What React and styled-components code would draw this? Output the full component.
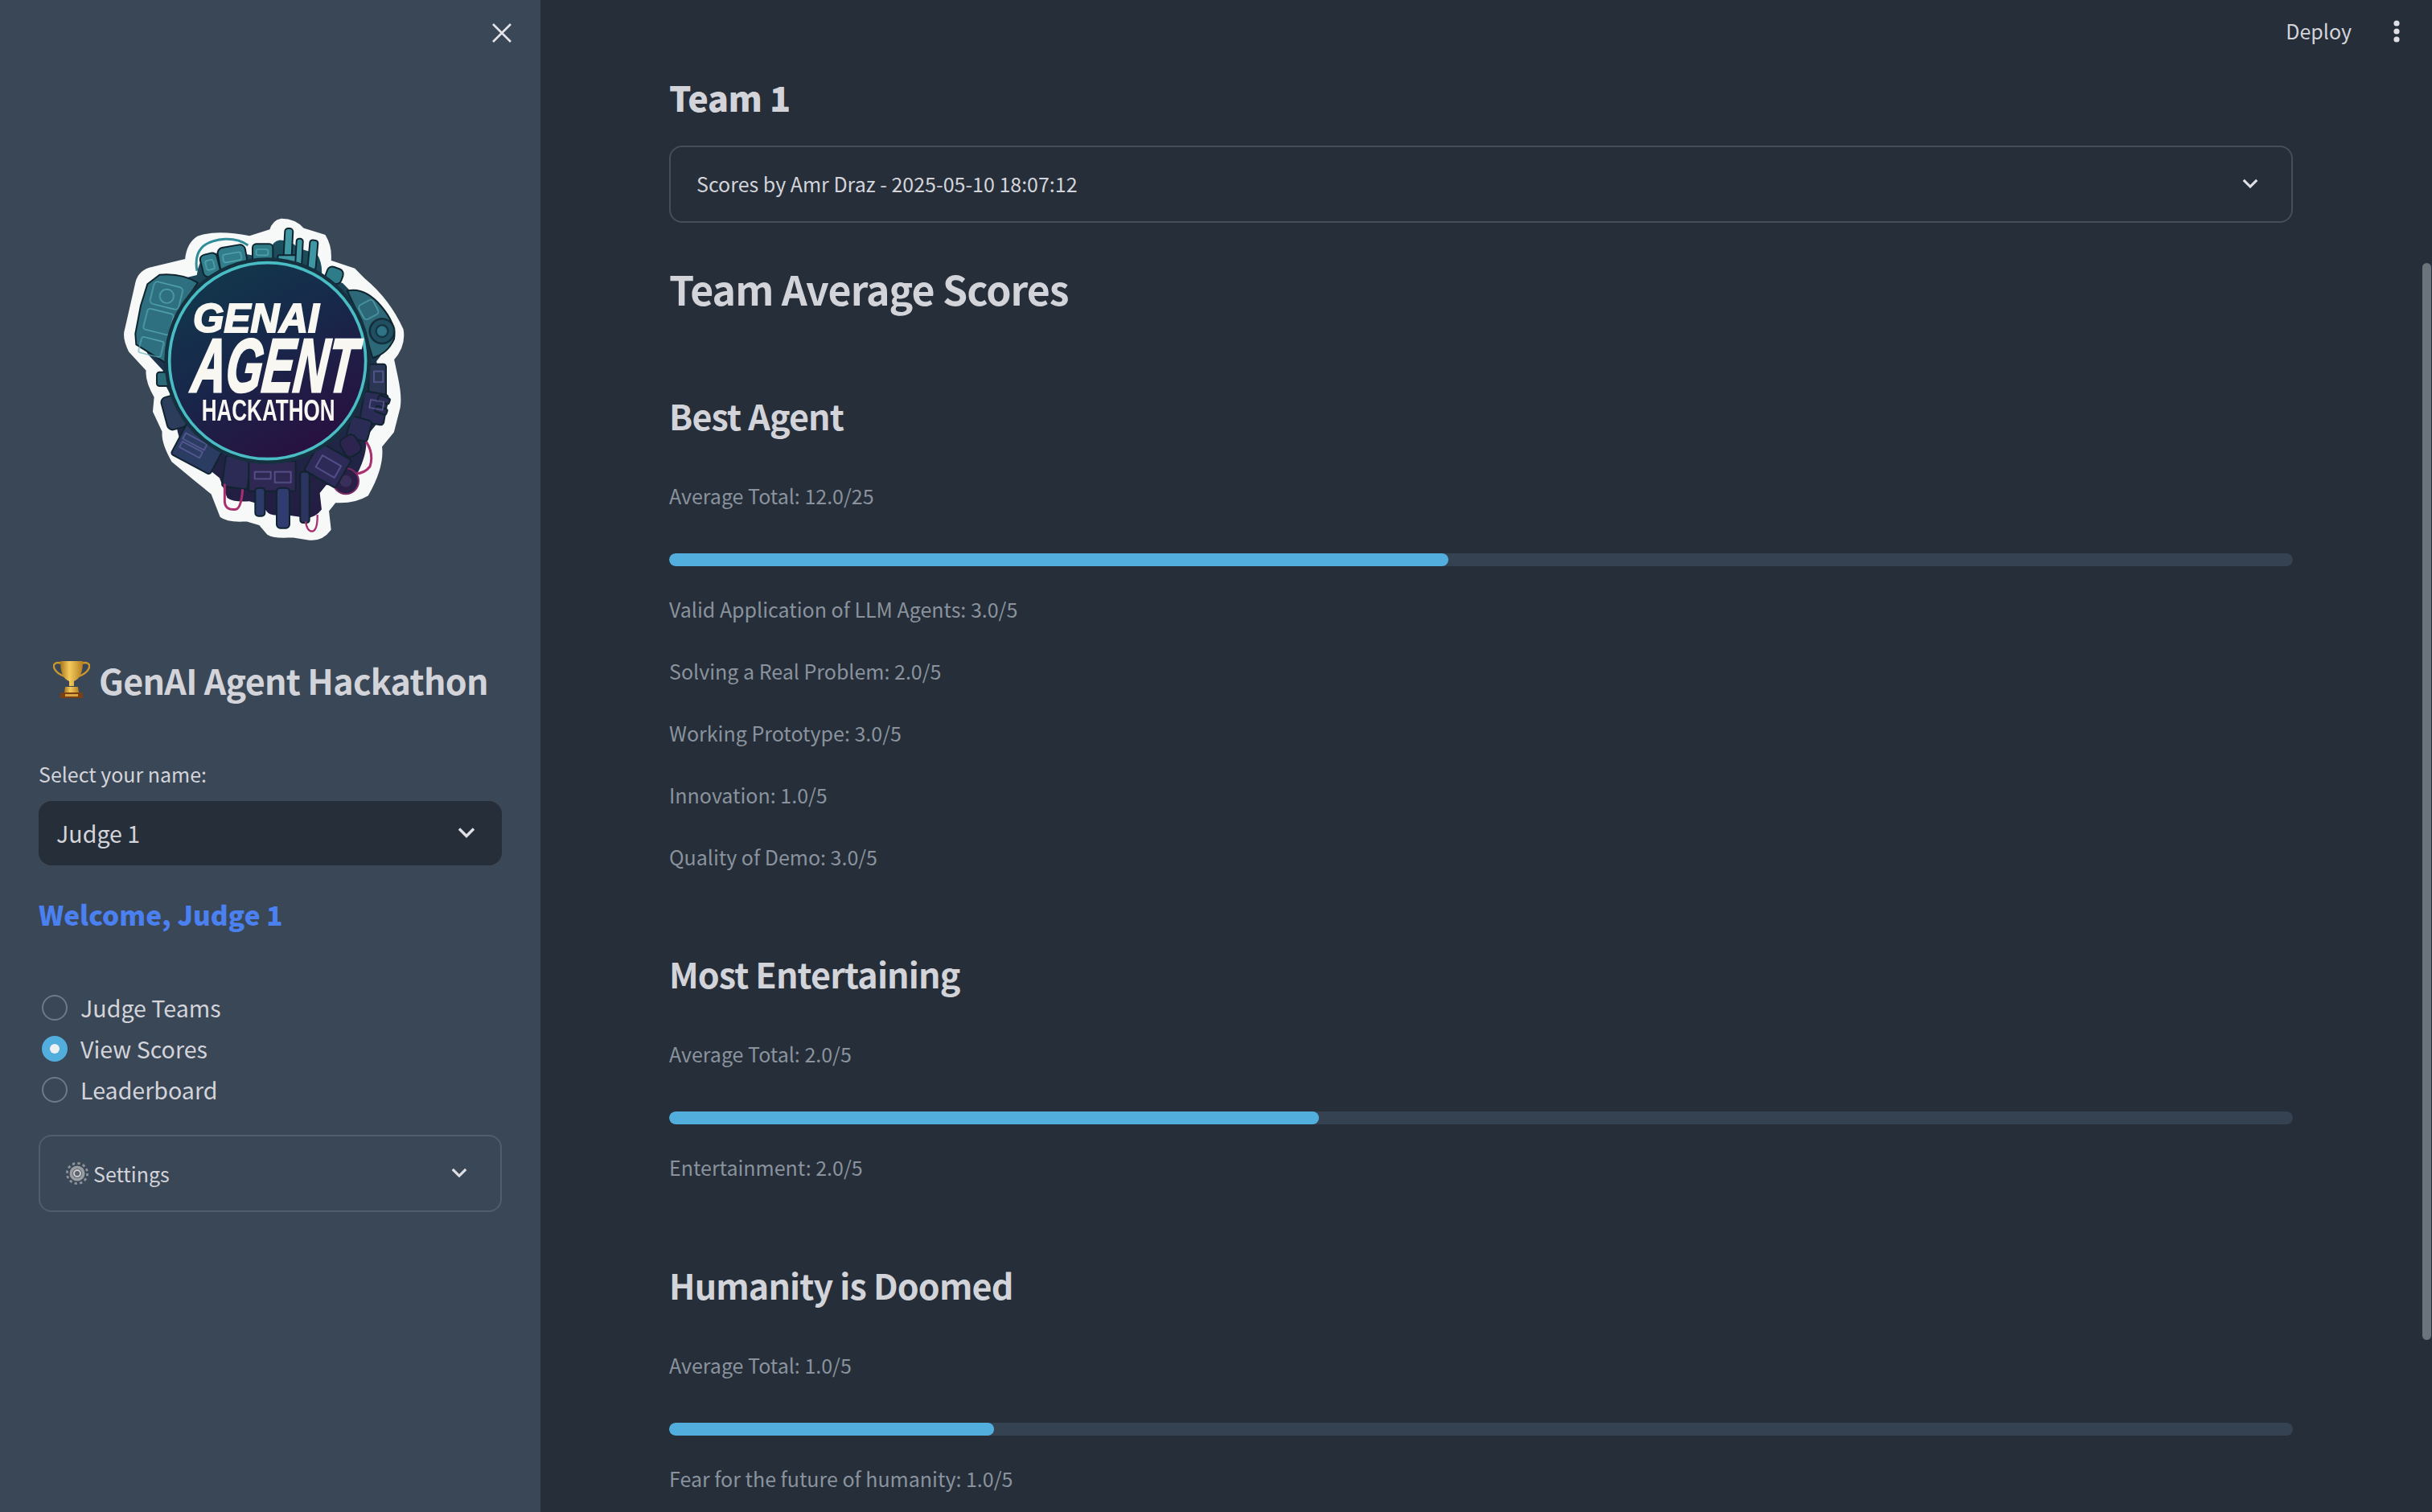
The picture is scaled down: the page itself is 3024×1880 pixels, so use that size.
import React from "react";
import styled, { createGlobalStyle } from "styled-components";

const Global = createGlobalStyle`
  html, body { margin: 0; padding: 0; background: #252e39; }
  body { font-family: "Noto Sans CJK SC", "Noto Sans", sans-serif; overflow: hidden; }
  * { box-sizing: border-box; }
`;

const Page = styled.div`
  display: flex;
  width: 3024px;
  height: 1880px;
  overflow: hidden;
  background: #252e39;
  color: #d3d4da;
`;

const Sidebar = styled.aside`
  flex: 0 0 672px;
  width: 672px;
  min-width: 0;
  height: 100%;
  padding: 0 48px;
  background: #3a4757;
  display: flex;
  flex-direction: column;
`;

const CloseRow = styled.div`
  height: 82px;
  display: flex;
  align-items: center;
  justify-content: flex-end;
  color: #e4e5ea;
`;

const LogoWrap = styled.div`
  margin: 158px 0 0 72px;
  width: 420px;
  height: 460px;
`;

const SideTitle = styled.h2`
  margin: 115px 0 0 18px;
  height: 60px;
  display: flex;
  align-items: center;
  gap: 11px;
  font-size: 43px;
  font-weight: 700;
  line-height: 60px;
  letter-spacing: -0.7px;
  white-space: nowrap;
  color: #d3d4da;
`;

const FieldLabel = styled.label`
  display: block;
  margin-top: 67px;
  height: 40px;
  font-size: 25px;
  line-height: 40px;
  color: #d3d4da;
`;

const SelectBox = styled.div`
  margin-top: 14px;
  height: 80px;
  padding: 0 32px 2px 22px;
  border-radius: 16px;
  background: #252e39;
  display: flex;
  align-items: center;
  justify-content: space-between;
  font-size: 28.6px;
  color: #d3d4da;
`;

const Welcome = styled.div`
  margin-top: 36px;
  height: 50px;
  font-size: 33.4px;
  line-height: 50px;
  font-weight: 900;
  color: #4b80f0;
`;

const RadioList = styled.div`
  margin-top: 65px;
  display: flex;
  flex-direction: column;
`;

const RadioRow = styled.div`
  height: 51px;
  padding-left: 4px;
  display: flex;
  align-items: center;
  gap: 16px;
  font-size: 28.6px;
  color: #d3d4da;
`;

const RadioDot = styled.span`
  flex: none;
  width: 32px;
  height: 32px;
  border-radius: 50%;
  display: flex;
  align-items: center;
  justify-content: center;
  background: ${(p) => (p.$on ? "#52aedc" : "transparent")};
  border: ${(p) => (p.$on ? "none" : "2px solid #6f7986")};
  &::after {
    content: "";
    display: ${(p) => (p.$on ? "block" : "none")};
    width: 12px;
    height: 12px;
    border-radius: 50%;
    background: #eef0f2;
  }
`;

const Expander = styled.div`
  margin-top: ${(p) => p.$top}px;
  height: 96px;
  border: 2px solid ${(p) => p.$line};
  border-radius: 16px;
  padding: 0 40px ${(p) => p.$bottom}px 32px;
  display: flex;
  align-items: center;
  justify-content: space-between;
  font-size: 25px;
  color: #d3d4da;
`;

const ExpanderLabel = styled.span`
  display: flex;
  align-items: center;
  gap: 6px;
`;

const ChevronWrap = styled.span`
  display: flex;
  margin-top: ${(p) => p.$shift}px;
`;

const Main = styled.main`
  position: relative;
  flex: 1;
  min-width: 0;
  height: 100%;
  overflow: hidden;
  padding: 0 173px 0 160px;
`;

const Header = styled.header`
  position: absolute;
  top: 0;
  right: 0;
  height: 78px;
  padding-right: 39px;
  display: flex;
  align-items: center;
  gap: 51px;
  font-size: 25px;
  color: #d3d4da;
`;

const DeployLabel = styled.span`
  padding-bottom: 3px;
`;

const ScrollThumb = styled.div`
  position: absolute;
  top: 327px;
  right: 1px;
  width: 11px;
  height: 1339px;
  border-radius: 6px;
  background: #6b737b;
`;

const TeamName = styled.h3`
  margin: 90px 0 0;
  height: 60px;
  font-size: 43px;
  line-height: 60px;
  font-weight: 900;
  letter-spacing: -0.4px;
  color: #d3d4da;
`;

const PageTitle = styled.h2`
  margin: 46px 0 0;
  height: 70px;
  font-size: 50px;
  line-height: 70px;
  font-weight: 700;
  letter-spacing: -0.95px;
  color: #d3d4da;
`;

const SectionTitle = styled.h3`
  margin: ${(p) => p.$top}px 0 0;
  height: 60px;
  font-size: 43px;
  line-height: 60px;
  font-weight: 700;
  letter-spacing: -0.85px;
  color: #d3d4da;
`;

const Score = styled.p`
  margin: ${(p) => p.$top}px 0 0;
  height: 40px;
  font-size: 25px;
  line-height: 40px;
  color: #8a939d;
`;

const Track = styled.div`
  margin-top: 52px;
  height: 16px;
  border-radius: 8px;
  background: #354252;
  overflow: hidden;
`;

const Fill = styled.div`
  height: 100%;
  border-radius: 8px;
  background: #52aedc;
`;

const Chevron = ({ size = 24, width = 3.4, shift = 0 }) => (
  <ChevronWrap $shift={shift}>
    <svg width={size} height={size} viewBox="0 0 24 24" fill="none" stroke="#dfe0e5" strokeWidth={width}>
      <path d="M3 7.5 L12 16.5 L21 7.5" />
    </svg>
  </ChevronWrap>
);

const CloseIcon = () => (
  <svg width="26" height="26" viewBox="0 0 26 26" fill="none" stroke="currentColor" strokeWidth="2.6" style={{ marginRight: -13 }}>
    <path d="M2 2 L24 24 M24 2 L2 24" />
  </svg>
);

const Kebab = () => (
  <svg width="10" height="32" viewBox="0 0 10 32" fill="#dfe0e5">
    <circle cx="5" cy="6" r="3.6" />
    <circle cx="5" cy="16" r="3.6" />
    <circle cx="5" cy="26" r="3.6" />
  </svg>
);

const Trophy = () => (
  <svg width="46" height="48" viewBox="0 0 46 48">
    <defs>
      <linearGradient id="gold" x1="0" y1="0" x2="1" y2="0">
        <stop offset="0" stopColor="#a9741a" />
        <stop offset="0.4" stopColor="#f4cb5e" />
        <stop offset="1" stopColor="#b57f1e" />
      </linearGradient>
    </defs>
    <path d="M11 4 C2 1 -1 6 2 11 C4 15 9 18 14 20 M35 4 C44 1 47 6 44 11 C42 15 37 18 32 20" fill="none" stroke="#c9962c" strokeWidth="2.4" />
    <path d="M9 1 H37 C37 14 34 23 26 26 V32 H20 V26 C12 23 9 14 9 1 Z" fill="url(#gold)" />
    <path d="M15 33 H31 L32 40 H14 Z" fill="url(#gold)" />
    <rect x="9" y="40" width="28" height="7" rx="1" fill="#7b3f14" />
    <rect x="15" y="42" width="16" height="3" fill="#d9a441" />
  </svg>
);

const Gear = () => (
  <svg width="28" height="28" viewBox="0 0 28 28">
    <circle cx="14" cy="14" r="12.6" fill="none" stroke="#8f9398" strokeWidth="2.8" strokeDasharray="3.3 3.3" />
    <circle cx="14" cy="14" r="9.5" fill="#9a9ea3" />
    <circle cx="14" cy="14" r="6" fill="#5b626b" />
    <circle cx="14" cy="14" r="4" fill="none" stroke="#c9ccd0" strokeWidth="2" />
  </svg>
);

/* x, y, w, h, radius, rotation, fill */
const bodies = [
  [225, 668, 44, 52, 10, 0, "#2b6a78"],
  [392, 226, 64, 84, 18, -14, "#327d8b"],
  [456, 198, 104, 92, 20, -10, "#327d8b"],
  [582, 190, 76, 66, 14, 0, "#2f7c89"],
  [700, 132, 30, 130, 12, 3, "#3f97a3"],
  [676, 232, 70, 30, 6, 0, "#3f97a3"],
  [744, 170, 24, 100, 10, 3, "#3f97a3"],
  [792, 176, 30, 110, 10, 5, "#3f97a3"],
  [856, 278, 62, 58, 20, 20, "#2f7c89"],
  [1015, 638, 65, 125, 10, 0, "#2a3654"],
  [990, 745, 90, 115, 12, 10, "#2b2c55"],
  [1050, 760, 44, 22, 6, 20, "#2b2c55"],
  [1040, 800, 44, 22, 6, 20, "#2b2c55"],
  [940, 840, 80, 80, 12, 15, "#2b2c55"],
  [915, 905, 65, 75, 20, -30, "#2d2550"],
  [300, 880, 165, 140, 10, 28, "#2b3c63"],
  [252, 755, 75, 125, 20, -15, "#2b3d5a"],
  [475, 985, 95, 115, 8, 8, "#2c2b55"],
  [568, 1000, 175, 112, 4, 0, "#2e2852"],
  [592, 1100, 36, 105, 12, 0, "#2b3a68"],
  [672, 1100, 48, 150, 14, 0, "#303b70"],
  [760, 1040, 34, 190, 10, 0, "#2c3560"],
  [795, 955, 135, 120, 8, 30, "#2d2a58"],
];

const stickerPath =
  "M690 100 Q740 100 770 135 L850 160 Q875 200 870 255 L960 285 L1000 325 Q1090 400 1140 510 Q1150 570 1105 620 L1120 690 Q1135 760 1128 800 L1105 890 L1060 945 Q1070 1020 1010 1125 Q960 1155 890 1150 L862 1185 L870 1255 Q840 1295 795 1290 L730 1280 Q660 1285 640 1270 L610 1235 L560 1220 Q490 1225 465 1205 L432 1120 L370 1070 L285 1000 Q245 930 250 890 L215 815 L220 760 Q185 700 190 660 L125 590 Q100 540 110 510 L150 335 Q160 290 210 280 L335 250 Q340 190 380 165 Q450 140 570 165 L650 140 Q660 105 690 100 Z";

const Logo = () => (
  <svg width="420" height="460" viewBox="0 0 1260 1380">
    <defs>
      <linearGradient id="disc" x1="0.15" y1="0" x2="0.7" y2="1">
        <stop offset="0" stopColor="#113a4c" />
        <stop offset="0.5" stopColor="#18264a" />
        <stop offset="1" stopColor="#2a0f40" />
      </linearGradient>
      <linearGradient id="backing" x1="0" y1="0" x2="0" y2="1">
        <stop offset="0" stopColor="#1c4f5e" />
        <stop offset="0.55" stopColor="#1e2c48" />
        <stop offset="1" stopColor="#241c42" />
      </linearGradient>
    </defs>
    <path d={stickerPath} fill="#f7f8f8" stroke="#f7f8f8" strokeWidth="10" strokeLinejoin="round" />
    <path d="M375 290 Q355 180 480 172 Q530 170 565 195" fill="none" stroke="#2f8c98" strokeWidth="9" />
    <path d={stickerPath} fill="url(#backing)" transform="translate(638 680) scale(0.87) translate(-638 -680)" />
    <path d="M985 900 Q1040 960 1020 1020 Q990 1060 925 1040" fill="none" stroke="#a8306f" strokeWidth="9" />
    <circle cx="930" cy="1075" r="48" fill="#2a1f46" stroke="#7d2b66" strokeWidth="6" />
    <circle cx="930" cy="1075" r="22" fill="#3a2f5a" />
    <g stroke="#10242f" strokeWidth="6" strokeLinejoin="round">
      <path d="M235 305 Q320 298 378 335 L300 450 L268 640 L148 565 L145 525 L165 420 L190 340 Z" fill="#2e7080" />
      <path d="M935 365 Q1000 350 1060 420 Q1120 490 1110 545 Q1085 600 1030 615 L990 480 Z" fill="#2c6878" />
      {bodies.map((b, i) => (
        <rect key={i} x={b[0]} y={b[1]} width={b[2]} height={b[3]} rx={b[4]} fill={b[6]} transform={`rotate(${b[5]} ${b[0] + b[2] / 2} ${b[1] + b[3] / 2})`} />
      ))}
    </g>
    <g fill="none" stroke="#5fb3ba" strokeWidth="5" opacity="0.7">
      <rect x="205" y="340" width="110" height="85" rx="14" transform="rotate(14 260 385)" />
      <circle cx="262" cy="385" r="26" />
      <rect x="180" y="440" width="100" height="80" rx="10" transform="rotate(14 230 485)" />
      <rect x="160" y="545" width="85" height="60" rx="8" transform="rotate(14 205 580)" />
      <rect x="472" y="225" width="68" height="30" rx="8" transform="rotate(-10 505 240)" />
      <rect x="408" y="250" width="30" height="36" rx="8" transform="rotate(-14 423 268)" />
      <rect x="596" y="210" width="44" height="22" rx="6" />
      <rect x="985" y="405" width="60" height="60" rx="12" transform="rotate(-28 1015 435)" />
    </g>
    <circle cx="1065" cy="515" r="46" fill="#1f4f60" stroke="#10242f" strokeWidth="6" />
    <circle cx="1065" cy="515" r="22" fill="#2e7386" stroke="#10242f" strokeWidth="5" />
    <g fill="none" stroke="#6a66a6" strokeWidth="5" opacity="0.75">
      <rect x="322" y="915" width="90" height="24" transform="rotate(28 367 927)" />
      <rect x="310" y="945" width="85" height="24" transform="rotate(28 352 957)" />
      <rect x="590" y="1040" width="60" height="26" />
      <rect x="665" y="1040" width="60" height="40" />
      <rect x="825" y="995" width="80" height="50" transform="rotate(30 865 1020)" />
      <rect x="1035" y="665" width="34" height="40" />
      <rect x="1020" y="775" width="50" height="30" transform="rotate(10 1045 790)" />
    </g>
    <path d="M478 1085 V1150 Q480 1185 520 1180 Q540 1175 545 1105" fill="none" stroke="#a8306f" strokeWidth="9" />
    <path d="M780 1225 Q785 1262 805 1262 Q825 1258 824 1200" fill="none" stroke="#a8306f" strokeWidth="7" />
    <circle cx="638" cy="626" r="385" fill="#15303f" />
    <circle cx="638" cy="626" r="366" fill="url(#disc)" stroke="#49bcc4" strokeWidth="11" />
    <g fill="#f8f7f1" fontFamily="Liberation Sans, sans-serif" fontWeight="700">
      <text x="360" y="518" fontSize="150" fontStyle="italic" textLength="470" lengthAdjust="spacingAndGlyphs" stroke="#f8f7f1" strokeWidth="6">GENAI</text>
      <text transform="translate(350 740) skewX(-6)" fontSize="282" fontStyle="italic" textLength="612" lengthAdjust="spacingAndGlyphs" stroke="#f8f7f1" strokeWidth="9">AGENT</text>
      <text x="392" y="850" fontSize="112" textLength="498" lengthAdjust="spacingAndGlyphs">HACKATHON</text>
    </g>
  </svg>
);

const sections = [
  {
    title: "Best Agent",
    top: 93,
    total: "Average Total: 12.0/25",
    pct: 48,
    items: [
      "Valid Application of LLM Agents: 3.0/5",
      "Solving a Real Problem: 2.0/5",
      "Working Prototype: 3.0/5",
      "Innovation: 1.0/5",
      "Quality of Demo: 3.0/5",
    ],
  },
  { title: "Most Entertaining", top: 95, total: "Average Total: 2.0/5", pct: 40, items: ["Entertainment: 2.0/5"] },
  { title: "Humanity is Doomed", top: 96, total: "Average Total: 1.0/5", pct: 20, items: ["Fear for the future of humanity: 1.0/5"] },
];

export default function App() {
  return (
    <Page>
      <Global />
      <Sidebar>
        <CloseRow>
          <CloseIcon />
        </CloseRow>
        <LogoWrap>
          <Logo />
        </LogoWrap>
        <SideTitle>
          <Trophy />
          GenAI Agent Hackathon
        </SideTitle>
        <FieldLabel>Select your name:</FieldLabel>
        <SelectBox>
          Judge 1
          <Chevron />
        </SelectBox>
        <Welcome>Welcome, Judge 1</Welcome>
        <RadioList>
          <RadioRow>
            <RadioDot />
            Judge Teams
          </RadioRow>
          <RadioRow>
            <RadioDot $on />
            View Scores
          </RadioRow>
          <RadioRow>
            <RadioDot />
            Leaderboard
          </RadioRow>
        </RadioList>
        <Expander $top={31} $bottom={0} $line="#525d6c">
          <ExpanderLabel>
            <Gear />
            Settings
          </ExpanderLabel>
          <Chevron size={22} shift={-3} />
        </Expander>
      </Sidebar>
      <Main>
        <Header>
          <DeployLabel>Deploy</DeployLabel>
          <Kebab />
        </Header>
        <ScrollThumb />
        <TeamName>Team 1</TeamName>
        <Expander $top={31} $bottom={3} $line="#454f5c">
          Scores by Amr Draz - 2025-05-10 18:07:12
          <Chevron size={22} />
        </Expander>
        <PageTitle>Team Average Scores</PageTitle>
        {sections.map((s) => (
          <section key={s.title}>
            <SectionTitle $top={s.top}>{s.title}</SectionTitle>
            <Score $top={50}>{s.total}</Score>
            <Track>
              <Fill style={{ width: `${s.pct}%` }} />
            </Track>
            {s.items.map((it, i) => (
              <Score key={it} $top={i === 0 ? 33 : 37}>
                {it}
              </Score>
            ))}
          </section>
        ))}
      </Main>
    </Page>
  );
}
